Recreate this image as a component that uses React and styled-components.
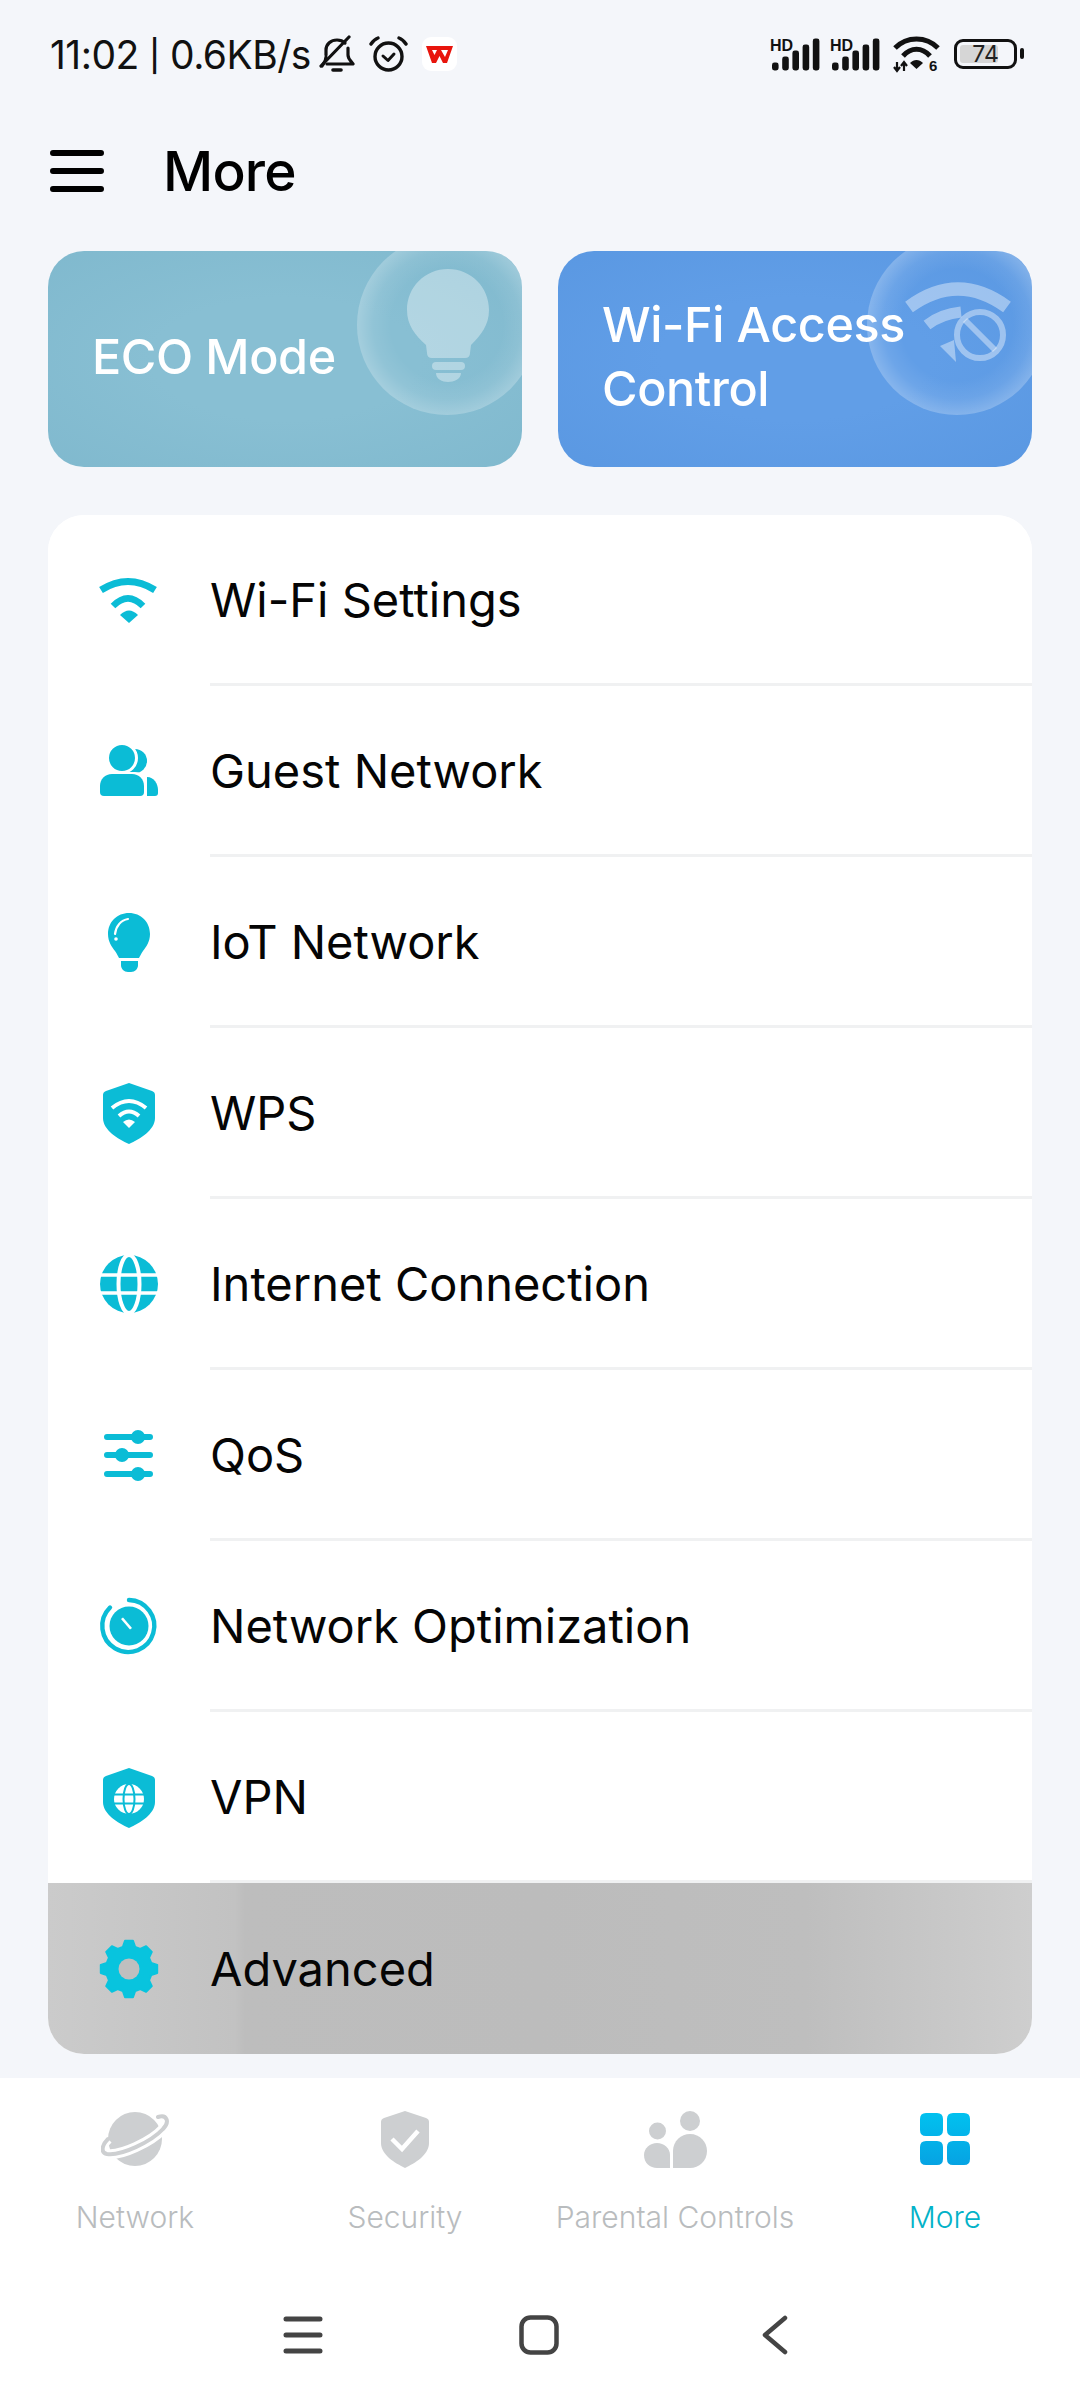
import React from 'react'
import styled, { createGlobalStyle } from 'styled-components'

const TEAL = '#0bbcd6'
const TAB_GREY = '#cdcfd1'
const FONT = 'Inter, "Noto Sans", Roboto, sans-serif'

const GlobalStyle = createGlobalStyle`
  html, body {
    margin: 0;
    padding: 0;
    background: #f4f6fa;
  }
  * {
    box-sizing: border-box;
  }
`

const Page = styled.div`
  width: 1080px;
  height: 2399px;
  overflow: hidden;
  display: flex;
  flex-direction: column;
  background: #f4f6fa;
  color: #000;
  font-family: ${FONT};
`

const StatusBar = styled.div`
  height: 108px;
  padding: 0 57px 0 50px;
  display: flex;
  align-items: center;
  justify-content: space-between;
`

const StatusGroup = styled.div`
  display: flex;
  align-items: center;
  gap: ${p => p.$gap}px;
`

const StatusText = styled.span`
  font-size: 39px;
  letter-spacing: -0.5px;
  color: #111;
  margin-right: -6px;
  white-space: nowrap;
`

const StatusPipe = styled.span`
  font-size: 31px;
  font-weight: 500;
  vertical-align: 2px;
`

const WifiSlot = styled.span`
  display: flex;
  margin: 0 4px 0 3px;
`

const AppTile = styled.div`
  width: 35px;
  height: 34px;
  background: #fff;
  border-radius: 9px;
  display: flex;
  align-items: center;
  justify-content: center;
`

const Battery = styled.div`
  position: relative;
  width: 63px;
  height: 30px;
  border: 3.5px solid #111;
  border-radius: 9px;
  padding: 3px;
  margin-right: 6px;

  &::after {
    content: '';
    position: absolute;
    right: -10px;
    top: 6px;
    width: 4px;
    height: 11px;
    border-radius: 2px;
    background: #111;
  }
`

const BatteryFill = styled.div`
  height: 100%;
  border-radius: 3px;
  background: #d6d6d6;
`

const BatteryText = styled.span`
  position: absolute;
  inset: 0;
  display: flex;
  align-items: center;
  justify-content: center;
  font-size: 23px;
  color: #222;
`

const Header = styled.header`
  height: 126px;
  margin-bottom: 17px;
  padding-left: 50px;
  display: flex;
  align-items: center;
  gap: 59px;
`

const PageTitle = styled.h1`
  margin: 0;
  font-size: 55px;
  font-weight: 500;
  letter-spacing: -0.8px;
`

const Shortcuts = styled.div`
  display: grid;
  grid-template-columns: 474px 474px;
  gap: 36px;
  padding: 0 48px;
`

const Shortcut = styled.div`
  position: relative;
  height: 216px;
  border-radius: 36px;
  overflow: hidden;
  padding: 0 0 4px 44px;
  display: flex;
  align-items: center;
  background: radial-gradient(ellipse at center, ${p => p.$mid} 40%, ${p => p.$edge} 100%);
`

const ShortcutLabel = styled.span`
  position: relative;
  z-index: 1;
  color: #fff;
  font-size: 48.5px;
  font-weight: 500;
  line-height: 64px;
  letter-spacing: -0.4px;
  white-space: pre-line;
`

const Glow = styled.div`
  position: absolute;
  left: 309px;
  top: -16px;
  width: 180px;
  height: 180px;
  border-radius: 50%;
  background: radial-gradient(circle closest-side, rgba(255, 255, 255, 0) 62%, rgba(255, 255, 255, 0.08) 82%, rgba(255, 255, 255, 0.24) 100%);

  svg {
    display: block;
  }
`

const MenuCard = styled.div`
  margin: 48px 48px 0;
  height: 1539px;
  background: #fff;
  border-radius: 36px;
  overflow: hidden;
  display: flex;
  flex-direction: column;
`

const MenuRow = styled.div`
  flex: 1;
  display: flex;
  align-items: stretch;
  background: ${p => p.$pressed
    ? 'linear-gradient(90deg, #cbcbcb 0, #c2c2c2 19%, #bdbdbd 20%, #bcbcbc 50%, #bebebe 77%, #cecece 100%)'
    : '#fff'};
`

const MenuIcon = styled.div`
  width: 162px;
  padding-left: 48px;
  display: flex;
  align-items: center;
  flex-shrink: 0;

  svg {
    display: block;
  }
`

const MenuLabel = styled.div`
  flex: 1;
  display: flex;
  align-items: center;
  font-size: 47px;
  letter-spacing: 0;
  color: #050505;
  border-bottom: ${p => (p.$last ? 'none' : '3px solid #f0f1f2')};
`

const TabBar = styled.nav`
  margin-top: 24px;
  flex: 1;
  background: #fff;
  padding-top: 31px;
`

const Tabs = styled.div`
  display: grid;
  grid-template-columns: repeat(4, 270px);
`

const Tab = styled.div`
  display: flex;
  flex-direction: column;
  align-items: center;
  gap: 28px;
`

const TabIcon = styled.div`
  height: 60px;
  display: flex;
  align-items: center;
  justify-content: center;

  svg {
    display: block;
  }
`

const TabLabel = styled.span`
  font-size: 30px;
  line-height: 40px;
  font-weight: 300;
  white-space: nowrap;
  color: ${p => (p.$active ? '#03b2c8' : '#b9bcbe')};
`

const SystemNav = styled.div`
  margin-top: 68px;
  height: 60px;
  display: grid;
  grid-template-columns: repeat(3, 236px);
  justify-content: center;
  transform: translateX(-1px);
`

const SystemButton = styled.div`
  display: flex;
  align-items: center;
  justify-content: center;
`

function BellOffIcon() {
  return (
    <svg width="36" height="38" viewBox="0 0 36 38" fill="none" stroke="#111" strokeWidth="3.2" strokeLinecap="round" strokeLinejoin="round">
      <path d="M7 20 V15 C7 9 12 5 18 5 C21 5 24 6 26 8" />
      <path d="M29 13 V20 C29 24 32 26 34 29 H8" />
      <path d="M3 31 C5 28 7 26 7 22" />
      <path d="M2 31 L30 2" />
      <path d="M14 35 H22" strokeWidth="3.6" />
    </svg>
  )
}

function AlarmIcon() {
  return (
    <svg width="39" height="36" viewBox="0 0 39 36" fill="none" stroke="#111" strokeLinecap="round" strokeLinejoin="round">
      <circle cx="19.5" cy="20.5" r="13.5" strokeWidth="3.4" />
      <path d="M14 20 L19 24.5 L25 18" strokeWidth="3" />
      <path d="M2 8 C4 5 6 3 9 2" strokeWidth="3.4" />
      <path d="M37 8 C35 5 33 3 30 2" strokeWidth="3.4" />
    </svg>
  )
}

function WpsLogo() {
  return (
    <svg width="27" height="17" viewBox="0 0 27 17">
      <path d="M0 0 H27 L21 17 H17 L13.5 10 L10 17 H6 Z" fill="#e8150d" />
      <path d="M6 4 H11 L8.5 9 Z M15 4 H22 L19 11 Z" fill="#fff" />
    </svg>
  )
}

function SignalIcon() {
  const heights = [8, 14, 20, 26, 32]
  return (
    <svg width="50" height="33" viewBox="0 0 50 33">
      <text x="0" y="12.5" fontFamily="Liberation Sans, sans-serif" fontWeight="700" fontSize="16" fill="#111">HD</text>
      {heights.map((h, i) => (
        <rect key={i} x={2 + i * 10.2} y={32.5 - h} width="6.6" height={h} rx="2.4" fill="#111" />
      ))}
    </svg>
  )
}

function WifiSixIcon() {
  return (
    <svg width="47" height="42" viewBox="0 -3 47 42" fill="none" stroke="#111">
      <path d="M2 12 C14 0 33 0 45 12" strokeWidth="5" />
      <path d="M10 20 C18 11 29 11 37 20" strokeWidth="5" />
      <path d="M17 27 L23.5 33 L30 27 C26 23 21 23 17 27 Z" fill="#111" stroke="none" />
      <path d="M4 26 V35 M1 31 L4 35 L7 31 M11 35 V26 M8 30 L11 26 L14 30" strokeWidth="2.2" />
      <text x="36" y="35" fontFamily="Liberation Sans, sans-serif" fontWeight="700" fontSize="15" fill="#111" stroke="none">6</text>
    </svg>
  )
}

function MenuBars() {
  return (
    <svg width="54" height="42" viewBox="0 0 54 42" stroke="#000" strokeWidth="6" strokeLinecap="round">
      <path d="M3 3 H51 M3 21 H51 M3 39 H51" />
    </svg>
  )
}

function BulbGlow() {
  return (
    <svg width="180" height="180" viewBox="0 0 180 180" fill="#fff" fillOpacity="0.36">
      <path d="M91 34 C114 34 132 52 132 75 C132 90 124 100 114 110 L113 118 Q113 123 108 123 H75 Q70 123 70 118 L69 110 C58 100 50 90 50 75 C50 52 68 34 91 34 Z" />
      <rect x="75" y="127" width="33" height="8" rx="4" />
      <path d="M79 138 H104 C104 144 97 147 91 147 C85 147 79 144 79 138 Z" />
    </svg>
  )
}

function WifiBlockGlow() {
  return (
    <svg width="180" height="180" viewBox="0 0 180 180" fill="none" stroke="#fff" strokeOpacity="0.4">
      <path d="M42 72 Q91 36 140 72" strokeWidth="13" />
      <path d="M60 90 Q74 79 94 77" strokeWidth="11" />
      <path d="M73 111 L87 105 L89 127 Z" fill="#fff" fillOpacity="0.4" stroke="none" />
      <circle cx="113" cy="100" r="23" strokeWidth="6" />
      <path d="M98 85 L128 115" strokeWidth="6" />
    </svg>
  )
}

// cog outline: eight teeth around the centre of the 66x64 icon box
const gearPoints = Array.from({ length: 8 }, (_, i) => {
  const a = (i * Math.PI) / 4 - Math.PI / 2
  return [[23, -0.27], [28.5, -0.14], [28.5, 0.14], [23, 0.27]]
    .map(([r, d]) => `${(33 + r * Math.cos(a + d)).toFixed(1)},${(32 + r * Math.sin(a + d)).toFixed(1)}`)
    .join(' ')
}).join(' ')

const icons = {
  wifi: (
    <>
      <path d="M5 21 Q32 4 59 21" fill="none" stroke={TEAL} strokeWidth="7" />
      <path d="M17 37 Q32 22 47 37" fill="none" stroke={TEAL} strokeWidth="6.5" />
      <path d="M24 46 Q33 37 42 46 L33 54 Z" fill={TEAL} />
    </>
  ),
  guest: (
    <>
      <circle cx="39" cy="21" r="12" fill={TEAL} />
      <path d="M51 37 C58 37 62 44 62 50 V53 Q62 56 59 56 H51 Z" fill={TEAL} />
      <circle cx="26" cy="18" r="14.5" fill={TEAL} stroke="#fff" strokeWidth="3" />
      <rect x="2" y="32" width="48" height="26" rx="11" fill="#fff" />
      <path d="M16 34 H36 C43 34 48 39 48 46 V52 Q48 56 44 56 H8 Q4 56 4 52 V46 C4 39 9 34 16 34 Z" fill={TEAL} />
    </>
  ),
  bulb: (
    <>
      <path d="M33 2 C45 2 54 11 54 23 C54 31 50 36 47 40 C45 43 44 45 43 47 H23 C22 45 21 43 19 40 C16 36 12 31 12 23 C12 11 21 2 33 2 Z" fill={TEAL} />
      <path d="M25 50 H42 V54 C42 58 39 61 35 61 H32 C28 61 25 58 25 54 Z" fill={TEAL} />
      <path d="M32 8 C25 9 20 15 19 23" fill="none" stroke="#fff" strokeWidth="2.2" strokeLinecap="round" />
      <circle cx="20" cy="28" r="1.8" fill="#fff" />
    </>
  ),
  wps: (
    <>
      <path d="M33 1 L56 9 Q59 10 59 13 V36 C59 48 44 57 33 62 C22 57 7 48 7 36 V13 Q7 10 10 9 Z" fill={TEAL} />
      <path d="M16 26 Q33 12 50 26" fill="none" stroke="#fff" strokeWidth="4" />
      <path d="M23 34 Q33 25 43 34" fill="none" stroke="#fff" strokeWidth="4" />
      <path d="M27 40 Q33 35 39 40 L33 46 Z" fill="#fff" />
    </>
  ),
  globe: (
    <>
      <circle cx="33" cy="31" r="29" fill={TEAL} />
      <path d="M3 22 H63 M3 40 H63" stroke="#fff" strokeWidth="3.5" />
      <ellipse cx="33" cy="31" rx="10.5" ry="29" fill="none" stroke="#fff" strokeWidth="4" />
    </>
  ),
  qos: (
    <>
      <path d="M11 13 H54 M11 31 H54 M11 50 H54" stroke={TEAL} strokeWidth="6" strokeLinecap="round" />
      <circle cx="42" cy="13" r="7" fill={TEAL} />
      <circle cx="26" cy="31" r="7" fill={TEAL} />
      <circle cx="42" cy="50" r="7" fill={TEAL} />
    </>
  ),
  optimize: (
    <>
      <path d="M33 5 A26 26 0 1 1 14 12.5" fill="none" stroke={TEAL} strokeWidth="4.4" strokeLinecap="round" />
      <circle cx="33" cy="31" r="19.5" fill={TEAL} />
      <path d="M25 24 L27 22.5 L36 33 L34 34.5 Z" fill="#fff" />
    </>
  ),
  vpn: (
    <>
      <path d="M33 2 L56 10 Q59 11 59 14 V36 C59 48 44 57 33 62 C22 57 7 48 7 36 V14 Q7 11 10 10 Z" fill={TEAL} />
      <circle cx="33" cy="33" r="15" fill="#fff" />
      <path d="M18 28.5 H48 M18 37.5 H48" stroke={TEAL} strokeWidth="2" />
      <ellipse cx="33" cy="33" rx="5.5" ry="15" fill="none" stroke={TEAL} strokeWidth="2" />
    </>
  ),
  gear: (
    <>
      <polygon points={gearPoints} fill="#08c4de" stroke="#08c4de" strokeWidth="2" strokeLinejoin="round" />
      <circle cx="33" cy="32" r="10.5" fill="#bfbfbf" />
    </>
  ),
}

const menuItems = [
  { icon: 'wifi', label: 'Wi-Fi Settings' },
  { icon: 'guest', label: 'Guest Network' },
  { icon: 'bulb', label: 'IoT Network' },
  { icon: 'wps', label: 'WPS' },
  { icon: 'globe', label: 'Internet Connection' },
  { icon: 'qos', label: 'QoS' },
  { icon: 'optimize', label: 'Network Optimization' },
  { icon: 'vpn', label: 'VPN' },
  { icon: 'gear', label: 'Advanced', pressed: true, last: true },
]

function PlanetIcon() {
  return (
    <svg width="68" height="56" viewBox="0 0 68 56" fill="none">
      <circle cx="34" cy="28" r="27" fill={TAB_GREY} />
      <path d="M57 6 C66 3 69 11 62 18 C50 31 20 45 6 43 C0 42 0 35 7 28" stroke="#fff" strokeWidth="10" />
      <path d="M57 6 C66 3 69 11 62 18 C50 31 20 45 6 43 C0 42 0 35 7 28" stroke={TAB_GREY} strokeWidth="4" strokeLinecap="round" />
    </svg>
  )
}

function ShieldCheckIcon() {
  return (
    <svg width="48" height="57" viewBox="0 0 48 57" fill="none">
      <path d="M24 0 L45 7 Q48 8 48 11 V32 C48 44 34 52 24 57 C14 52 0 44 0 32 V11 Q0 8 3 7 Z" fill={TAB_GREY} />
      <path d="M11 28 L21 38 L37 20" stroke="#fff" strokeWidth="4.5" />
    </svg>
  )
}

function FamilyIcon() {
  return (
    <svg width="63" height="57" viewBox="0 0 63 57" fill={TAB_GREY}>
      <circle cx="13.5" cy="20" r="8.5" />
      <circle cx="46" cy="10" r="10" />
      <path d="M26 57 V44 C26 37 20 32 13 32 C6 32 0 37 0 44 C0 52 6 57 13 57 Z" />
      <path d="M29 57 V40 C29 30 37 23 46 23 C56 23 63 31 63 40 C63 50 55 57 46 57 Z" />
    </svg>
  )
}

function GridIcon() {
  return (
    <svg width="50" height="52" viewBox="0 0 50 52">
      <defs>
        <linearGradient id="more-grad" x1="0" y1="0" x2="0" y2="1">
          <stop offset="0" stopColor="#01c1ef" />
          <stop offset="1" stopColor="#06a3e3" />
        </linearGradient>
      </defs>
      <path
        fill="url(#more-grad)"
        d="M6 0 H17 Q23 0 23 6 V17 Q23 23 17 23 H6 Q0 23 0 17 V6 Q0 0 6 0 Z
           M33 0 H44 Q50 0 50 6 V17 Q50 23 44 23 H33 Q27 23 27 17 V6 Q27 0 33 0 Z
           M6 28 H17 Q23 28 23 34 V46 Q23 52 17 52 H6 Q0 52 0 46 V34 Q0 28 6 28 Z
           M33 28 H44 Q50 28 50 34 V46 Q50 52 44 52 H33 Q27 52 27 46 V34 Q27 28 33 28 Z"
      />
    </svg>
  )
}

const tabs = [
  { label: 'Network', icon: <PlanetIcon /> },
  { label: 'Security', icon: <ShieldCheckIcon /> },
  { label: 'Parental Controls', icon: <FamilyIcon /> },
  { label: 'More', icon: <GridIcon />, active: true },
]

export default function App() {
  return (
    <Page>
      <GlobalStyle />
      <StatusBar>
        <StatusGroup $gap={14}>
          <StatusText>11:02 <StatusPipe>|</StatusPipe> 0.6KB/s</StatusText>
          <BellOffIcon />
          <AlarmIcon />
          <AppTile><WpsLogo /></AppTile>
        </StatusGroup>
        <StatusGroup $gap={10}>
          <SignalIcon />
          <SignalIcon />
          <WifiSlot><WifiSixIcon /></WifiSlot>
          <Battery>
            <BatteryFill style={{ width: '74%' }} />
            <BatteryText>74</BatteryText>
          </Battery>
        </StatusGroup>
      </StatusBar>

      <Header>
        <MenuBars />
        <PageTitle>More</PageTitle>
      </Header>

      <Shortcuts>
        <Shortcut $mid="#88bfd3" $edge="#80b9ce">
          <Glow><BulbGlow /></Glow>
          <ShortcutLabel>ECO Mode</ShortcutLabel>
        </Shortcut>
        <Shortcut $mid="#619ee7" $edge="#5a98e2">
          <Glow><WifiBlockGlow /></Glow>
          <ShortcutLabel>{'Wi-Fi Access\nControl'}</ShortcutLabel>
        </Shortcut>
      </Shortcuts>

      <MenuCard>
        {menuItems.map(item => (
          <MenuRow key={item.label} $pressed={item.pressed}>
            <MenuIcon>
              <svg width="66" height="64" viewBox="0 0 66 64">{icons[item.icon]}</svg>
            </MenuIcon>
            <MenuLabel $last={item.last}>{item.label}</MenuLabel>
          </MenuRow>
        ))}
      </MenuCard>

      <TabBar>
        <Tabs>
          {tabs.map(tab => (
            <Tab key={tab.label}>
              <TabIcon>{tab.icon}</TabIcon>
              <TabLabel $active={tab.active}>{tab.label}</TabLabel>
            </Tab>
          ))}
        </Tabs>
        <SystemNav>
          <SystemButton>
            <svg width="40" height="38" viewBox="0 0 40 38" stroke="#444" strokeWidth="5" strokeLinecap="round">
              <path d="M3 3 H37 M3 19 H37 M3 35 H37" />
            </svg>
          </SystemButton>
          <SystemButton>
            <svg width="40" height="40" viewBox="0 0 40 40" fill="none" stroke="#444" strokeWidth="4.5">
              <rect x="2.5" y="2.5" width="35" height="35" rx="9" />
            </svg>
          </SystemButton>
          <SystemButton>
            <svg width="26" height="40" viewBox="0 0 26 40" fill="none" stroke="#444" strokeWidth="4.5" strokeLinecap="round" strokeLinejoin="round">
              <path d="M23 3 L3 20 L23 37" />
            </svg>
          </SystemButton>
        </SystemNav>
      </TabBar>
    </Page>
  )
}
